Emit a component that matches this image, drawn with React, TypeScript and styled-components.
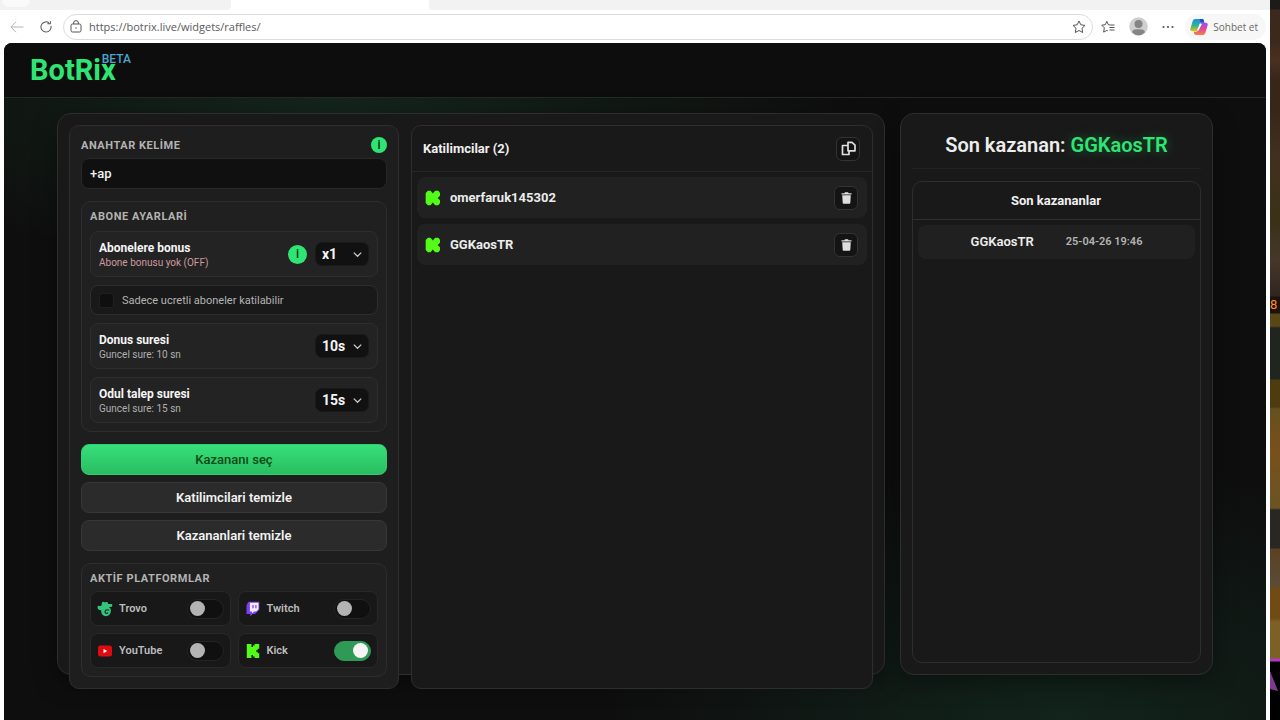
import React from "react";
import styled, { createGlobalStyle, css } from "styled-components";

const GlobalStyle = createGlobalStyle`
  *, *::before, *::after { box-sizing: border-box; }
  html, body { margin: 0; background: #ffffff; }
  body {
    font-family: Roboto, "Liberation Sans", sans-serif;
    color: #f2f2f2;
    overflow: hidden;
  }
  button, input, select { font-family: inherit; margin: 0; }
`;

const line = "#2e2e2e";
const green = "#2ee574";

/* ---------- Desktop and browser frame ---------- */

const Desktop = styled.div`
  display: flex;
  height: 100vh;
  min-height: 720px;
`;

const Browser = styled.div`
  flex: 1;
  min-width: 0;
  display: flex;
  flex-direction: column;
  background: #ffffff;
`;

const TabStrip = styled.div`
  display: flex;
  height: 10px;
  background: #ffffff;
`;

const TabSpace = styled.div<{ $side: "left" | "right" }>`
  background: #f2f2f2;
  ${(p) =>
    p.$side === "left"
      ? css`
          width: 231px;
          border-bottom-right-radius: 4px;
        `
      : css`
          flex: 1;
          border-bottom-left-radius: 4px;
        `}
`;

const TabGroup = styled.div`
  width: 28px;
  height: 7px;
  margin-left: 2px;
  background: #fafafa;
  border-radius: 0 0 8px 8px;
`;

const ActiveTab = styled.div`
  width: 198px;
`;

const Toolbar = styled.nav`
  display: flex;
  align-items: center;
  height: 33px;
  padding: 0 4px 0 7px;
  font-family: "Open Sans", "Noto Sans", sans-serif;
`;

const ToolButton = styled.button<{ $dim?: boolean }>`
  display: flex;
  align-items: center;
  justify-content: center;
  width: 30px;
  height: 26px;
  padding: 0;
  border: 0;
  background: none;
  color: ${(p) => (p.$dim ? "#b4b4b4" : "#555555")};
  &:first-child { width: 20px; margin-right: 4px; }
`;

const AddressBar = styled.div`
  flex: 1;
  display: flex;
  align-items: center;
  height: 26px;
  margin-left: 2px;
  padding: 0 5px 0 6px;
  border: 1px solid #dcdcdc;
  border-radius: 13px;
  color: #555555;
`;

const AddressInput = styled.input`
  flex: 1;
  min-width: 0;
  padding: 0 0 0 7px;
  border: 0;
  outline: 0;
  background: none;
  color: #5a5a5a;
  font-family: inherit;
  font-size: 11px;
`;

const StarButton = styled(ToolButton)`
  width: 16px;
`;

const Copilot = styled.button`
  display: flex;
  align-items: center;
  gap: 5px;
  height: 26px;
  margin-left: 2px;
  padding: 0 8px 0 5px;
  border: 0;
  border-radius: 13px;
  background: #f7f7f7;
  color: #6a6a6a;
  font-size: 10px;
  white-space: nowrap;
`;

const Viewport = styled.div`
  flex: 1;
  min-height: 0;
  display: flex;
  flex-direction: column;
  margin: 0 4px;
  border-radius: 8px 8px 0 0;
  overflow: hidden;
  background:
    radial-gradient(ellipse 520px 170px at 26% 8%, #14251b 0%, transparent 100%),
    radial-gradient(ellipse 460px 260px at 84% 100%, #12241c 0%, transparent 100%),
    #0e0e0e;
`;

const GameStrip = styled.aside`
  display: flex;
  flex-direction: column;
  align-items: flex-start;
  width: 10px;
  overflow: hidden;
  background: linear-gradient(
    #1c1b1a 0 9px, #3c281c 10px 40px, #4a3020 60px, #38261b 80px 110px,
    #42301f 160px, #3a3118 220px, #45372a 260px, #30261c 296px,
    #1e130c 297px 313px, #5a4718 314px 326px, #20251f 328px 379px,
    #4e3c10 380px 407px, #65501f 409px, #77501c 450px, #6c5424 508px,
    #292724 510px 548px, #5c4122 549px, #5a4a38 584px, #704b14 590px 618px,
    #7c6025 622px 658px, #b43ac0 659px 661px, #000000 662px
  );
`;

const Score = styled.span`
  margin-top: 297px;
  color: #ff8a2a;
  font-size: 13px;
  line-height: 16px;
`;

/* ---------- Page ---------- */

const SiteHeader = styled.header`
  flex: none;
  display: flex;
  align-items: flex-start;
  height: 55px;
  padding: 11px 26px 0;
  border-bottom: 1px solid #262a27;
  background: #0d0d0d;
`;

const Brand = styled.a`
  display: flex;
  align-items: flex-start;
  color: ${green};
  font-size: 29px;
  font-weight: 700;
  line-height: 32px;
  text-decoration: none;
`;

const Beta = styled.sup`
  margin-left: -14px;
  color: #4aa5cf;
  font-size: 12px;
  font-weight: 500;
  line-height: 10px;
`;

const Main = styled.main`
  display: grid;
  grid-template-columns: minmax(0, 828fr) minmax(0, 313fr);
  gap: 15px;
  padding: 15px 53px 0;
`;

const Surface = styled.section`
  height: calc(100vh - 158px);
  min-height: 562px;
  padding: 11px;
  border: 1px solid ${line};
  border-radius: 14px;
  background: #191919;
  box-shadow: 0 8px 24px rgba(0, 0, 0, 0.35);
`;

const RaffleSurface = styled(Surface)`
  display: grid;
  grid-template-columns: minmax(0, 330fr) minmax(0, 462fr);
  gap: 12px;
`;

const WinnersSurface = styled(Surface)`
  display: flex;
  flex-direction: column;
`;

const Panel = styled.div<{ $raised?: boolean }>`
  display: flex;
  flex-direction: column;
  border: 1px solid ${line};
  border-radius: 10px;
  background: ${(p) => (p.$raised ? "#1e1e1e" : "#191919")};
`;

const SettingsPanel = styled(Panel)`
  gap: 12px;
  padding: 11px;
`;

const Field = styled.div`
  display: flex;
  flex-direction: column;
  gap: 5px;
`;

const FieldHead = styled.div`
  display: flex;
  align-items: center;
  justify-content: space-between;
  height: 16px;
`;

const labelText = css`
  margin: 0;
  color: #b3b3b3;
  font-size: 11px;
  font-weight: 700;
  line-height: 15px;
  letter-spacing: 0.05em;
`;

const FieldLabel = styled.label`
  ${labelText}
`;

const GroupTitle = styled.h2`
  ${labelText}
`;

const InfoButton = styled.button<{ $size: number }>`
  flex: none;
  width: ${(p) => p.$size}px;
  height: ${(p) => p.$size}px;
  padding: 0;
  border: 0;
  border-radius: 50%;
  background: ${green};
  color: #0c2a17;
  font-size: 12px;
  font-weight: 500;
  line-height: 16px;
`;

const TextInput = styled.input`
  width: 100%;
  height: 31px;
  padding: 0 8px;
  border: 1px solid #282828;
  border-radius: 8px;
  outline: 0;
  background: #101010;
  color: #f0f0f0;
  font-size: 13px;
  font-weight: 500;
`;

const Group = styled.div<{ $gap: number }>`
  padding: 7px 8px 8px;
  border: 1px solid ${line};
  border-radius: 10px;
  background: #202020;
  ${GroupTitle} { margin-bottom: ${(p) => p.$gap}px; }
`;

const Stack = styled.div`
  display: flex;
  flex-direction: column;
  gap: 8px;
`;

const Row = styled.div`
  display: flex;
  align-items: center;
  gap: 8px;
  height: 46px;
  padding: 0 8px;
  border: 1px solid ${line};
  border-radius: 8px;
  background: #232323;
`;

const RowText = styled.div`
  flex: 1;
  display: flex;
  flex-direction: column;
  padding-top: 2px;
`;

const RowLabel = styled.label`
  color: #f5f5f5;
  font-size: 12px;
  font-weight: 700;
  line-height: 16px;
`;

const RowHint = styled.span<{ $warn?: boolean }>`
  color: ${(p) => (p.$warn ? "#cf9aa0" : "#b0b0b0")};
  font-size: 10px;
  line-height: 14px;
`;

const SelectWrap = styled.div`
  display: grid;
  align-items: center;
  width: 54px;
  > * { grid-area: 1 / 1; }
  svg { justify-self: end; margin-right: 7px; pointer-events: none; }
`;

const Select = styled.select`
  appearance: none;
  width: 100%;
  height: 24px;
  padding: 0 6px;
  border: 1px solid #1a1a1a;
  border-radius: 7px;
  background: #111111;
  color: #f5f5f5;
  font-size: 14px;
  font-weight: 700;
`;

const CheckRow = styled.label`
  display: flex;
  align-items: center;
  gap: 8px;
  height: 30px;
  padding: 0 8px;
  border: 1px solid ${line};
  border-radius: 8px;
  background: #191919;
  color: #b4b4b4;
  font-size: 11px;
`;

const Checkbox = styled.input`
  appearance: none;
  width: 15px;
  height: 15px;
  border: 1px solid #202020;
  border-radius: 3px;
  background: #0f0f0f;
  &:checked { background: ${green}; }
`;

const Actions = styled.div`
  display: flex;
  flex-direction: column;
  gap: 7px;
`;

const ActionButton = styled.button<{ $primary?: boolean }>`
  height: 31px;
  border: 1px solid ${(p) => (p.$primary ? "#2fd06d" : "#373737")};
  border-radius: 8px;
  background: ${(p) => (p.$primary ? "linear-gradient(#36e07b, #2abd61)" : "#2b2b2b")};
  color: ${(p) => (p.$primary ? "#0a4a14" : "#f2f2f2")};
  font-size: 13px;
  font-weight: ${(p) => (p.$primary ? 500 : 600)};
`;

const Platforms = styled.div`
  display: grid;
  grid-template-columns: 1fr 1fr;
  gap: 7px;
`;

const Platform = styled.label`
  display: flex;
  align-items: center;
  gap: 6px;
  height: 35px;
  padding: 0 6px;
  border: 1px solid #292929;
  border-radius: 8px;
  background: #181818;
  color: #bdbdbd;
  font-size: 11px;
  font-weight: 600;
  > svg { flex: none; width: 16px; }
`;

const PlatformName = styled.span`
  flex: 1;
`;

const Toggle = styled.input`
  appearance: none;
  display: flex;
  align-items: center;
  width: 37px;
  height: 20px;
  padding: 0 2px;
  border: 1px solid #242424;
  border-radius: 10px;
  background: #101010;
  &::before {
    content: "";
    width: 15px;
    height: 15px;
    border-radius: 50%;
    background: #b3b3b3;
  }
  &:checked {
    justify-content: flex-end;
    border-color: #2f9a55;
    background: #2f9a55;
  }
  &:checked::before { background: #f5f5f5; }
`;

const PanelHead = styled.div`
  display: flex;
  align-items: center;
  justify-content: space-between;
  height: 46px;
  padding: 0 12px 0 11px;
  border-bottom: 1px solid #262626;
`;

const PanelTitle = styled.h2`
  margin: 0;
  color: #f0f0f0;
  font-size: 13px;
  font-weight: 700;
  line-height: 18px;
`;

const IconButton = styled.button`
  flex: none;
  display: flex;
  align-items: center;
  justify-content: center;
  width: 24px;
  height: 24px;
  padding: 0;
  border: 1px solid #333333;
  border-radius: 6px;
  background: #141414;
  color: #dedede;
`;

const List = styled.ul`
  display: flex;
  flex-direction: column;
  gap: 6px;
  margin: 0;
  padding: 5px;
  list-style: none;
`;

const Participant = styled.li`
  display: flex;
  align-items: center;
  gap: 9px;
  height: 41px;
  padding: 0 9px 0 8px;
  border-radius: 8px;
  background: #212121;
  color: #ececec;
  font-size: 13px;
  font-weight: 700;
`;

const ParticipantName = styled.span`
  flex: 1;
`;

const LastWinner = styled.h1`
  margin: 0 0 12px;
  height: 44px;
  border-bottom: 1px solid #222222;
  color: #ededed;
  font-size: 20px;
  font-weight: 600;
  line-height: 40px;
  text-align: center;
`;

const WinnerName = styled.span`
  color: ${green};
  text-shadow: 0 0 12px rgba(46, 229, 116, 0.35);
`;

const WinnersPanel = styled(Panel)`
  flex: 1;
`;

const WinnersHead = styled(PanelHead)`
  justify-content: center;
  height: 38px;
  border-bottom-color: #303030;
`;

const Winner = styled.li`
  display: flex;
  align-items: center;
  justify-content: center;
  gap: 32px;
  height: 34px;
  padding-bottom: 1px;
  border-radius: 8px;
  background: #202020;
  color: #ededed;
  font-size: 13px;
  font-weight: 600;
`;

const WinTime = styled.time`
  color: #b3b3b3;
  font-size: 11px;
  font-weight: 600;
`;

/* ---------- Icons ---------- */

const Chevron = () => (
  <svg width="9" height="9" viewBox="0 0 9 9" fill="none" stroke="#c8c8c8" strokeWidth="1.3">
    <path d="M.8 2.6 4.5 6.3 8.2 2.6" />
  </svg>
);

const kickPath =
  "M1.333 0h8v5.333H12V2.667h2.667V0h8v8H20v2.667h-2.667v2.666H20V16h2.667v8h-8v-2.667H12v-2.666H9.333V24h-8Z";

const KickIcon = () => (
  <svg width="14" height="14" viewBox="0 0 24 24" fill="#53fc18">
    <path d={kickPath} />
  </svg>
);

const KickBadge = () => (
  <svg width="16" height="16" viewBox="0 0 24 24" fill="#53fc18">
    <path
      stroke="#53fc18"
      strokeWidth="3"
      strokeLinejoin="round"
      d="M5 2.500h2.500L10 5.500V9l3.500-3.500L16 2.500h3.500L21 5v3l-4 4 4 4v3l-1.500 2.500H16L13.500 18.500 10 15v3.500L7.500 21.500H5L2.500 19V5Z"
    />
  </svg>
);

const TrovoIcon = () => (
  <svg width="16" height="16" viewBox="0 0 16 16">
    <path
      fill="#34c47c"
      d="M5 1.4c.8-.8 2.200-.8 3 0 .8-.6 2-.7 2.800 0l.4 1.600h3.200c.8 0 1 .7.9 1.400-.1 1.100-.9 1.700-2 1.700h-1.500c1.700 1 2.200 2.200 2.100 3.900-.2 3-2.200 5.200-5 5.200-2.900 0-4.700-1.900-4.700-4.600V9.200C2 9.300.5 8.100.5 6.200c0-1 .9-1.500 1.900-1.300l1.900.1Z"
    />
    <path d="M12.200 9.200C9.800 8.200 8 9.300 8 10.900c.1 1.500 2 2 2.900.8" fill="none" stroke="#15291e" strokeWidth="1.100" />
  </svg>
);

const TwitchIcon = () => (
  <svg width="16" height="16" viewBox="0 0 16 16">
    <path fill="#7a3ff0" d="M3.500.8h10.800v8L10 13.100H7.800L5.300 15.500V13.100H1.500V4Z" />
    <path fill="#f3ecff" d="M4.900 1.700h8.600v6.600l-2.300 2.200H9l-1.900 1.900v-1.900H4.900Z" />
    <path stroke="#7a3ff0" strokeWidth="1.200" d="M8 4v3.200M10.900 4v3.200" />
  </svg>
);

const YouTubeIcon = () => (
  <svg width="16" height="16" viewBox="0 0 16 16">
    <rect x="1" y="2.500" width="14" height="11" rx="2.500" fill="#dd0b12" />
    <path fill="#fff" d="M6.500 6v4.200l3.700-2.100Z" />
  </svg>
);

const CopyIcon = () => (
  <svg width="15" height="15" viewBox="0 0 15 15" fill="none" stroke="currentColor" strokeWidth="1.700">
    <path d="M7 1.300h4l3 2.800v5.700H7Z" strokeLinejoin="round" />
    <path d="M7 4.500H1.500v9H8V9.800" strokeLinejoin="round" />
  </svg>
);

const TrashIcon = () => (
  <svg width="11" height="12" viewBox="0 0 11 12" fill="currentColor">
    <path d="M.5 1.200H3.400L4 .3h3l.6.900h2.900v1.200H.5ZM1.200 3.200h8.600l-.5 7.600c0 .6-.5 1-1 1H2.700c-.5 0-1-.4-1-1Z" />
  </svg>
);

const BackIcon = () => (
  <svg width="14" height="12" viewBox="0 0 14 12" fill="none" stroke="currentColor">
    <path d="M6 .8.900 6 6 11.200M1 6h12.500" />
  </svg>
);

const ReloadIcon = () => (
  <svg width="12" height="12" viewBox="0 0 13 13" fill="none" stroke="currentColor" strokeWidth="1.100">
    <path d="M11.900 5.300a5.500 5.500 0 1 1-2.300-3.400M8 3.100h3.200V.2" />
  </svg>
);

const LockIcon = () => (
  <svg width="12" height="13" viewBox="0 0 12 13" fill="none" stroke="currentColor">
    <rect x="1" y="4" width="10" height="8" rx="1.500" />
    <path d="M3.600 4V3a2.400 2.400 0 0 1 4.800 0v1M5.300 8h1.400" />
  </svg>
);

const starPath = "M7 1l1.800 3.800 4.200.6-3 2.900.7 4.200L7 10.500l-3.700 2 .7-4.200-3-2.900 4.200-.6Z";

const StarIcon = () => (
  <svg width="14" height="14" viewBox="0 0 14 14" fill="none" stroke="currentColor" strokeLinejoin="round">
    <path d={starPath} />
  </svg>
);

const FavoritesIcon = () => (
  <svg width="14" height="14" viewBox="0 0 14 14" fill="none" stroke="currentColor" strokeLinejoin="round">
    <path d="M9.500 5 7.300 4.700 5.800 1.300 4.300 4.700.7 5.200l2.600 2.600-.6 4.300 3.100-1.700 1 .5M9.500 5H13.500M8.500 7.500h5M8.500 10h5" />
  </svg>
);

const AvatarIcon = () => (
  <svg width="19" height="19" viewBox="0 0 19 19">
    <circle cx="9.500" cy="9.500" r="9.300" fill="#cfcfcf" />
    <circle cx="9.500" cy="7" r="4" fill="#858585" />
    <path d="M3.200 15.400c0-2.600 2.600-3.200 6.300-3.200s6.300.6 6.300 3.200a8.600 8.600 0 0 1-12.600 0Z" fill="#858585" />
  </svg>
);

const DotsIcon = () => (
  <svg width="12" height="4" viewBox="0 0 12 4" fill="currentColor">
    <circle cx="1.500" cy="2" r="1.100" />
    <circle cx="6" cy="2" r="1.100" />
    <circle cx="10.500" cy="2" r="1.100" />
  </svg>
);

const CopilotIcon = () => (
  <svg width="18" height="18" viewBox="0 0 18 18">
    <defs>
      <linearGradient id="cpLeft" x1="0" y1="0" x2="0" y2="1">
        <stop offset="0" stopColor="#1c8fe6" />
        <stop offset=".55" stopColor="#35b58a" />
        <stop offset="1" stopColor="#e8c21c" />
      </linearGradient>
      <linearGradient id="cpRight" x1="0" y1="0" x2="0" y2="1">
        <stop offset="0" stopColor="#9a4df0" />
        <stop offset=".5" stopColor="#e0489a" />
        <stop offset="1" stopColor="#f7803c" />
      </linearGradient>
    </defs>
    <path fill="url(#cpLeft)" d="M5.200 1h7c.8 0 1.300.5 1.500 1.200L14.200 4.300h-2.400c-1 0-1.600.5-1.900 1.400L8 11.900c-.3.900-.9 1.400-1.900 1.400H2.200C.8 13.300 0 12.300.3 11L2.700 3C3.100 1.700 3.900 1 5.200 1Z" />
    <path fill="url(#cpRight)" d="M12.800 17h-7c-.8 0-1.300-.5-1.500-1.200L3.800 13.700h2.400c1 0 1.600-.5 1.900-1.400L10 6.100c.3-.9.900-1.400 1.900-1.400h3.900c1.400 0 2.200 1 1.900 2.300L15.300 15c-.4 1.300-1.200 2-2.500 2Z" />
    <path fill="#1d4fd0" d="M9.600 1h2.600c.8 0 1.300.5 1.500 1.200l.6 2.500h-3.700Z" />
    <path fill="#ffffff" d="M9.800 5.800h2.200L8.600 12.400H6.900Z" />
  </svg>
);

const PurpleShard = styled.svg`
  margin-top: 356px;
`;

/* ---------- Data ---------- */

const participants = ["omerfaruk145302", "GGKaosTR"];

const platforms = [
  { name: "Trovo", icon: <TrovoIcon />, on: false },
  { name: "Twitch", icon: <TwitchIcon />, on: false },
  { name: "YouTube", icon: <YouTubeIcon />, on: false },
  { name: "Kick", icon: <KickIcon />, on: true },
];

const winners = [{ name: "GGKaosTR", time: "25-04-26 19:46" }];

type SettingProps = {
  id: string;
  label: string;
  hint: string;
  value: string;
  options: string[];
  warn?: boolean;
  info?: boolean;
};

const Setting = ({ id, label, hint, value, options, warn, info }: SettingProps) => (
  <Row>
    <RowText>
      <RowLabel htmlFor={id}>{label}</RowLabel>
      <RowHint $warn={warn}>{hint}</RowHint>
    </RowText>
    {info && <InfoButton $size={19} type="button">i</InfoButton>}
    <SelectWrap>
      <Select id={id} defaultValue={value}>
        {options.map((o) => (
          <option key={o}>{o}</option>
        ))}
      </Select>
      <Chevron />
    </SelectWrap>
  </Row>
);

export default function App() {
  return (
    <Desktop>
      <GlobalStyle />
      <Browser>
        <TabStrip>
          <TabSpace $side="left"><TabGroup /></TabSpace>
          <ActiveTab />
          <TabSpace $side="right" />
        </TabStrip>
        <Toolbar>
          <ToolButton $dim aria-label="Geri"><BackIcon /></ToolButton>
          <ToolButton aria-label="Yenile"><ReloadIcon /></ToolButton>
          <AddressBar>
            <LockIcon />
            <AddressInput aria-label="Adres" defaultValue="https://botrix.live/widgets/raffles/" />
            <StarButton aria-label="Favorilere ekle"><StarIcon /></StarButton>
          </AddressBar>
          <ToolButton aria-label="Favoriler"><FavoritesIcon /></ToolButton>
          <ToolButton aria-label="Profil"><AvatarIcon /></ToolButton>
          <ToolButton aria-label="Ayarlar"><DotsIcon /></ToolButton>
          <Copilot><CopilotIcon />Sohbet et</Copilot>
        </Toolbar>

        <Viewport>
          <SiteHeader>
            <Brand href="#">BotRix<Beta>BETA</Beta></Brand>
          </SiteHeader>

          <Main>
            <RaffleSurface>
              <SettingsPanel $raised>
                <Field>
                  <FieldHead>
                    <FieldLabel htmlFor="keyword">ANAHTAR KELİME</FieldLabel>
                    <InfoButton $size={16} type="button">i</InfoButton>
                  </FieldHead>
                  <TextInput id="keyword" defaultValue="+ap" />
                </Field>

                <Group $gap={7}>
                  <GroupTitle>ABONE AYARLARİ</GroupTitle>
                  <Stack>
                    <Setting id="bonus" label="Abonelere bonus" hint="Abone bonusu yok (OFF)" value="x1" options={["x1", "x2", "x3"]} warn info />
                    <CheckRow>
                      <Checkbox type="checkbox" />
                      Sadece ucretli aboneler katilabilir
                    </CheckRow>
                    <Setting id="spin" label="Donus suresi" hint="Guncel sure: 10 sn" value="10s" options={["5s", "10s", "15s"]} />
                    <Setting id="claim" label="Odul talep suresi" hint="Guncel sure: 15 sn" value="15s" options={["15s", "30s", "60s"]} />
                  </Stack>
                </Group>

                <Actions>
                  <ActionButton $primary type="button">Kazananı seç</ActionButton>
                  <ActionButton type="button">Katilimcilari temizle</ActionButton>
                  <ActionButton type="button">Kazananlari temizle</ActionButton>
                </Actions>

                <Group $gap={5}>
                  <GroupTitle>AKTİF PLATFORMLAR</GroupTitle>
                  <Platforms>
                    {platforms.map((p) => (
                      <Platform key={p.name}>
                        {p.icon}
                        <PlatformName>{p.name}</PlatformName>
                        <Toggle type="checkbox" defaultChecked={p.on} />
                      </Platform>
                    ))}
                  </Platforms>
                </Group>
              </SettingsPanel>

              <Panel>
                <PanelHead>
                  <PanelTitle>Katilimcilar ({participants.length})</PanelTitle>
                  <IconButton type="button" aria-label="Kopyala"><CopyIcon /></IconButton>
                </PanelHead>
                <List>
                  {participants.map((name) => (
                    <Participant key={name}>
                      <KickBadge />
                      <ParticipantName>{name}</ParticipantName>
                      <IconButton type="button" aria-label="Sil"><TrashIcon /></IconButton>
                    </Participant>
                  ))}
                </List>
              </Panel>
            </RaffleSurface>

            <WinnersSurface>
              <LastWinner>Son kazanan: <WinnerName>GGKaosTR</WinnerName></LastWinner>
              <WinnersPanel>
                <WinnersHead><PanelTitle>Son kazananlar</PanelTitle></WinnersHead>
                <List>
                  {winners.map((w) => (
                    <Winner key={w.time}>
                      {w.name}
                      <WinTime>{w.time}</WinTime>
                    </Winner>
                  ))}
                </List>
              </WinnersPanel>
            </WinnersSurface>
          </Main>
        </Viewport>
      </Browser>
      <GameStrip>
        <Score>8</Score>
        <PurpleShard width="10" height="24" viewBox="0 0 10 24">
          <path d="M0 2 8 22 0 20Z" fill="#7d3a94" />
        </PurpleShard>
      </GameStrip>
    </Desktop>
  );
}
